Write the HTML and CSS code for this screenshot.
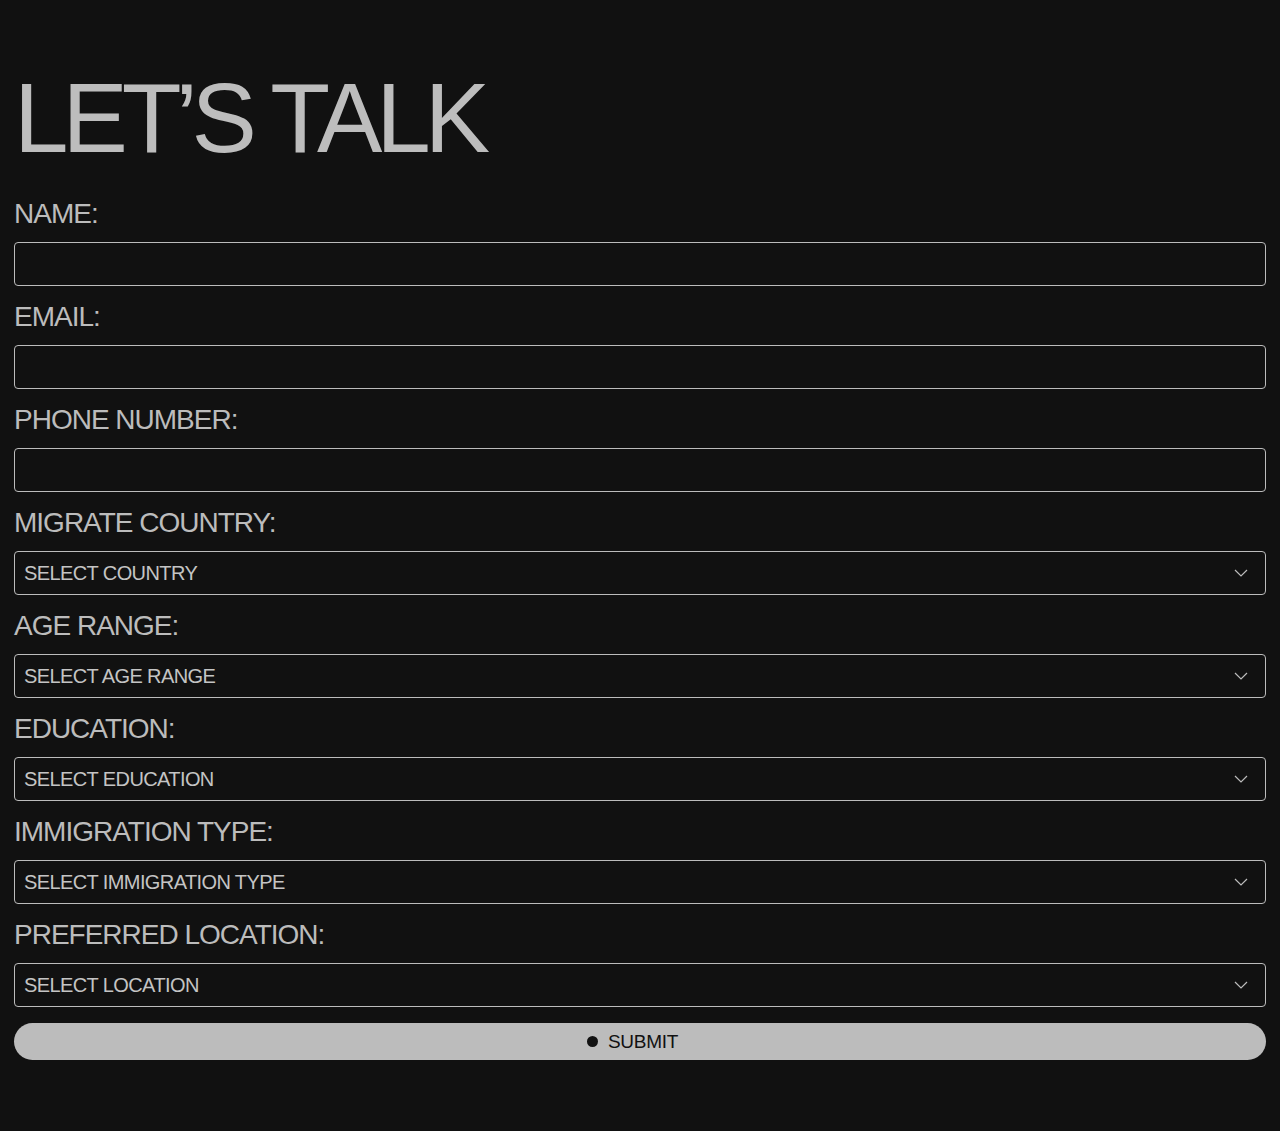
FILE: index.html
```html
<!DOCTYPE html>
<html lang="en">
<head>
<meta charset="utf-8">
<title>Let's Talk</title>
<link rel="stylesheet" href="styles.css">
</head>
<body>
<main class="page">
  <h1 class="title">LET’S TALK</h1>
  <form class="form">
    <div class="field">
      <label class="label" for="name">NAME:</label>
      <input class="control" id="name" type="text">
    </div>
    <div class="field">
      <label class="label" for="email">EMAIL:</label>
      <input class="control" id="email" type="email">
    </div>
    <div class="field">
      <label class="label" for="phone">PHONE NUMBER:</label>
      <input class="control" id="phone" type="tel">
    </div>
    <div class="field">
      <label class="label" for="country">MIGRATE COUNTRY:</label>
      <div class="select-wrap">
        <select class="control select" id="country"><option>SELECT COUNTRY</option></select>
        <svg class="chev" width="14" height="8" viewBox="0 0 14 8"><path d="M1 1l6 6 6-6" fill="none" stroke="#bcbcbc" stroke-width="1.2"/></svg>
      </div>
    </div>
    <div class="field">
      <label class="label" for="age">AGE RANGE:</label>
      <div class="select-wrap">
        <select class="control select" id="age"><option>SELECT AGE RANGE</option></select>
        <svg class="chev" width="14" height="8" viewBox="0 0 14 8"><path d="M1 1l6 6 6-6" fill="none" stroke="#bcbcbc" stroke-width="1.2"/></svg>
      </div>
    </div>
    <div class="field">
      <label class="label" for="edu">EDUCATION:</label>
      <div class="select-wrap">
        <select class="control select" id="edu"><option>SELECT EDUCATION</option></select>
        <svg class="chev" width="14" height="8" viewBox="0 0 14 8"><path d="M1 1l6 6 6-6" fill="none" stroke="#bcbcbc" stroke-width="1.2"/></svg>
      </div>
    </div>
    <div class="field">
      <label class="label" for="imm">IMMIGRATION TYPE:</label>
      <div class="select-wrap">
        <select class="control select" id="imm"><option>SELECT IMMIGRATION TYPE</option></select>
        <svg class="chev" width="14" height="8" viewBox="0 0 14 8"><path d="M1 1l6 6 6-6" fill="none" stroke="#bcbcbc" stroke-width="1.2"/></svg>
      </div>
    </div>
    <div class="field">
      <label class="label" for="loc">PREFERRED LOCATION:</label>
      <div class="select-wrap">
        <select class="control select" id="loc"><option>SELECT LOCATION</option></select>
        <svg class="chev" width="14" height="8" viewBox="0 0 14 8"><path d="M1 1l6 6 6-6" fill="none" stroke="#bcbcbc" stroke-width="1.2"/></svg>
      </div>
    </div>
    <button class="submit" type="button"><span class="dot"></span>SUBMIT</button>
  </form>
</main>
</body>
</html>
```
FILE: styles.css
```css
html, body {
  margin: 0;
  padding: 0;
  background: #111111;
}
body {
  font-family: "Liberation Sans", Arial, sans-serif;
  color: #bcbcbc;
}
.page {
  padding: 69px 14px 60px;
}
.title {
  margin: 0 0 16px;
  font-size: 98px;
  font-weight: 400;
  line-height: 98px;
  letter-spacing: -6px;
  color: #bdbdbd;
}
.form {
  display: flex;
  flex-direction: column;
}
.field {
  display: flex;
  flex-direction: column;
  padding-top: 14px;
}
.label {
  display: block;
  font-size: 28px;
  line-height: 34px;
  letter-spacing: -1px;
  margin-bottom: 11px;
  color: #bcbcbc;
}
.control {
  box-sizing: border-box;
  width: 100%;
  height: 44px;
  margin: 0;
  border: 1px solid #bcbcbc;
  border-radius: 4px;
  background: #111111;
  color: #c4c4c4;
  font-family: "Liberation Sans", Arial, sans-serif;
  font-size: 20px;
  letter-spacing: -0.6px;
  padding: 0 9px;
  outline: none;
}
.select-wrap {
  position: relative;
}
.select {
  appearance: none;
  -webkit-appearance: none;
  display: block;
}
.chev {
  position: absolute;
  right: 18px;
  top: 18px;
  pointer-events: none;
}
.submit {
  margin-top: 16px;
  height: 37px;
  width: 100%;
  border: none;
  border-radius: 19px;
  background: #bcbcbc;
  color: #111111;
  font-family: "Liberation Sans", Arial, sans-serif;
  font-size: 19px;
  letter-spacing: -0.3px;
  display: flex;
  align-items: center;
  justify-content: center;
  gap: 10px;
  padding: 0 15px 0 0;
}
.dot {
  width: 11px;
  height: 11px;
  border-radius: 50%;
  background: #111111;
  display: inline-block;
}
```
